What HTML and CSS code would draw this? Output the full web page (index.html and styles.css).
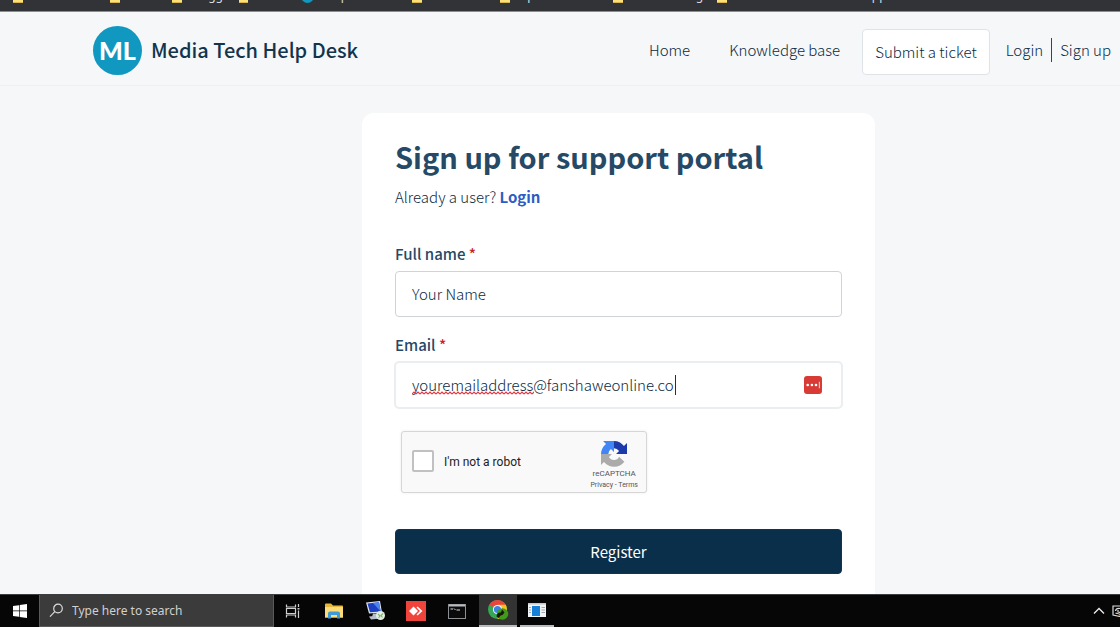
FILE: index.html
```html
<!DOCTYPE html>
<html lang="en">
<head>
  <meta charset="UTF-8">
  <meta name="viewport" content="width=device-width, initial-scale=1.0">
  <title>Media Tech Help Desk</title>
  <link rel="stylesheet" href="styles.css">
</head>
<body>
<div class="bookmarks">
  <span class="bookmark bm-1"><i class="folder"></i>Resources</span>
  <span class="bookmark bm-2"><i class="folder"></i>Media</span>
  <span class="bookmark bm-3"><i class="folder"></i>Blogger</span>
  <span class="bookmark bm-4"><i class="folder"></i>Courses</span>
  <span class="bookmark bm-5"><i class="dot"></i>Help Desk</span>
  <span class="bookmark bm-6"><i class="folder"></i>Tutorials</span>
  <span class="bookmark bm-7"><i class="folder"></i>Open Courses</span>
  <span class="bookmark bm-8"><i class="folder"></i>Tech Catalog</span>
  <span class="bookmark"><i class="folder"></i>Media Tools and Deskt apps</span>
</div>

<div class="portal">
  <header class="header">
    <a class="brand" href="#">
      <span class="logo">ML</span>
      <span>Media Tech Help Desk</span>
    </a>
    <nav class="nav">
      <a class="nav-home" href="#">Home</a>
      <a href="#">Knowledge base</a>
      <a class="ticket" href="#">Submit a ticket</a>
      <a class="nav-login" href="#">Login</a>
      <a class="nav-signup" href="#">Sign up</a>
    </nav>
  </header>

  <main class="main">
    <form class="card">
      <h1>Sign up for support portal</h1>
      <p class="already">Already a user? <a href="#">Login</a></p>

      <div class="field">
        <label for="fullName">Full name <span class="required">*</span></label>
        <input type="text" id="fullName" value="Your Name">
      </div>

      <div class="field">
        <label for="email">Email <span class="required">*</span></label>
        <div class="input-wrap">
          <input class="focused" type="text" id="email" value="youremailaddress@fanshaweonline.co" spellcheck="false">
          <svg class="squiggle" aria-hidden="true">
            <defs>
              <pattern id="wave" width="4" height="4" patternUnits="userSpaceOnUse">
                <path d="M0 3L2 1L4 3" fill="none" stroke="#e5343d" stroke-width="1.200"/>
              </pattern>
            </defs>
            <rect width="100%" height="4" fill="url(#wave)"/>
          </svg>
          <span class="caret"></span>
          <button class="fill-button" type="button" aria-label="Fill email">
            <svg width="18" height="18" viewBox="0 0 18 18">
              <rect width="18" height="18" rx="3" fill="#d83a35"/>
              <circle cx="3.7" cy="9" r="1.3" fill="#fff"/>
              <circle cx="7.9" cy="9" r="1.3" fill="#fff"/>
              <circle cx="12" cy="9" r="1.3" fill="#fff"/>
              <path d="M15.4 5.8V12.2" stroke="#f6b9b6" stroke-width="1.2"/>
            </svg>
          </button>
        </div>
      </div>

      <div class="captcha">
        <input type="checkbox" id="robot">
        <label for="robot">I'm not a robot</label>
        <div class="captcha-brand">
          <svg width="26" height="26" viewBox="0 0 64 64">
            <path fill="#1c3aa9" d="M64 32V5l-7.400 7.400A32 32 0 0 0 32 0v18a16 16 0 0 1 12.500 6.500L37 32z"/>
            <path fill="#4285f4" d="M32 0H5l7.400 7.400A32 32 0 0 0 0 32h18a16 16 0 0 1 6.500-12.500L32 27z"/>
            <path fill="#ababab" d="M0 32v27l7.400-7.400A32 32 0 0 0 57.500 51L44.500 38.500A14 14 0 0 1 19.500 39.500L27 32z"/>
          </svg>
          <span class="captcha-name">reCAPTCHA</span>
          <span class="captcha-links"><a href="#">Privacy</a> - <a href="#">Terms</a></span>
        </div>
      </div>

      <button class="register" type="submit">Register</button>
    </form>
  </main>
</div>

<footer class="taskbar">
  <button class="start" aria-label="Start">
    <svg width="14" height="14" viewBox="0 0 14 14" fill="#fff">
      <path d="M0 2L6 1.200V6.600H0zM6.700 1.100L14 0V6.600H6.700zM0 7.300H6V12.700L0 11.900zM6.700 7.300H14V14L6.700 12.900z"/>
    </svg>
  </button>
  <div class="search">
    <svg width="15" height="15" viewBox="0 0 15 15" fill="none" stroke="#dcdcdc" stroke-width="1.200">
      <circle cx="9" cy="5.500" r="4.300"/>
      <path d="M5.800 8.700L1 13.600"/>
    </svg>
    <input type="text" placeholder="Type here to search" aria-label="Search">
  </div>
  <div class="apps">
    <button aria-label="Task View">
      <svg width="16" height="16" viewBox="0 0 16 16" fill="none" stroke="#d0d0d0" stroke-width="1.200">
        <path d="M1.500 1.500V4H10.500V1.500M1.500 14.500V12H10.500V14.500M1.500 5.500H10.500V10.500H1.500zM13.500 1V4M13.500 7.500V15"/>
        <path d="M12.500 5.800H14.500" stroke="#fff"/>
      </svg>
    </button>
    <button aria-label="File Explorer">
      <svg width="18" height="16" viewBox="0 0 18 16">
        <path d="M0 1.500Q0 .5 1 .5H6L8 2.500H17Q18 2.500 18 3.500V14.500H0z" fill="#e9b63c"/>
        <path d="M0 4H18V14.500H0z" fill="#fbdc79"/>
        <path d="M3 15.500V10.500Q3 8.500 5 8.500H13Q15 8.500 15 10.500V15.500H12V12H6V15.500z" fill="#3f9bd8"/>
      </svg>
    </button>
    <button aria-label="Remote Desktop">
      <svg width="20" height="20" viewBox="0 0 20 20">
        <path d="M1 1.500L15 0L17 11.500L4 12.500z" fill="#dfe4ee"/>
        <path d="M2.500 2.500L14 1.300L15.700 10.500L5 11.300z" fill="#1c3fc4"/>
        <path d="M8 2L14 1.300L15.700 10.500z" fill="#4d83ec"/>
        <path d="M8 12.500H12L13 16H7zM4 15.500L14 14.500L16 17.500L6 18.500z" fill="#b9bfca"/>
        <circle cx="15.500" cy="14.500" r="4.500" fill="#e4eee1"/>
        <path d="M13 13L15 15L13.500 17M18 12.500L16 14.500L17.500 16.500" fill="none" stroke="#7bb274" stroke-width="1.100"/>
      </svg>
    </button>
    <button aria-label="AnyDesk">
      <svg width="20" height="20" viewBox="0 0 20 20">
        <rect width="20" height="20" fill="#ef443b"/>
        <path d="M3 10L7.500 5.500L12 10L7.500 14.500z" fill="#fff"/>
        <path d="M10.500 6.500L11.600 5.500L16.500 10L11.600 14.500L10.500 13.500L14 10z" fill="#fff"/>
      </svg>
    </button>
    <button aria-label="Command Prompt">
      <svg width="18" height="15" viewBox="0 0 18 15">
        <rect x=".5" y=".5" width="17" height="14" fill="#0b0b0b" stroke="#8d9092"/>
        <path d="M1 1.500H17" stroke="#b9bcbe" stroke-width="2"/>
        <path d="M2.500 5H5M6 4.500L7.500 6M8.500 6H12" stroke="#ddd" fill="none"/>
      </svg>
    </button>
    <button class="app-active" aria-label="Chrome">
      <svg width="22" height="22" viewBox="0 0 22 22">
        <circle cx="10.500" cy="10.500" r="9.500" fill="#34a853"/>
        <path d="M10.500 10.500L2.300 5.700A9.500 9.500 0 0 1 18.700 5.700L18 7H10.500z" fill="#e8453c"/>
        <path d="M10.500 20A9.500 9.500 0 0 0 18.700 5.800H10.500L14.500 12.800z" fill="#fbc116"/>
        <circle cx="10.500" cy="10.500" r="4.600" fill="#fff"/>
        <circle cx="10.500" cy="10.500" r="3.600" fill="#3f7fe8"/>
        <circle cx="15.500" cy="15" r="5.800" fill="#3f9c18"/>
        <path d="M9.500 17.500Q10 13 14 13.500L15 10.500L17.500 13.500L15.500 16Q13 16 12 19z" fill="#1b1512"/>
      </svg>
    </button>
    <button class="app-open" aria-label="Settings window">
      <svg width="18" height="14" viewBox="0 0 18 14">
        <rect width="18" height="14" fill="#f2f4f5"/>
        <path d="M0 .8H18" stroke="#c4cbd0" stroke-width="1.600"/>
        <rect x="4" y="3" width="8" height="10" fill="#1680d8"/>
        <path d="M1 4.500H3M1 7H3M1 9.500H3M13.500 4.500H17M13.500 7H17M13.500 9.500H17" stroke="#9fa9b0"/>
      </svg>
    </button>
  </div>
  <div class="tray">
    <svg width="12" height="8" viewBox="0 0 12 8" fill="none" stroke="#eee" stroke-width="1.300">
      <path d="M1 6.500L6 1.500L11 6.500"/>
    </svg>
    <svg width="8" height="12" viewBox="0 0 8 12" fill="none" stroke="#ddd" stroke-width="1.200">
      <path d="M8 1H1V10L8 11.500"/>
      <path d="M8 3.500Q4 3 3.500 6M3.500 8Q5.500 9 8 7M6 5V7"/>
      <path d="M7 10L8 9" stroke="#e58a2a" stroke-width="2"/>
    </svg>
  </div>
</footer>
</body>
</html>
```
FILE: styles.css
```css
* {
    box-sizing: border-box;
}
body {
    margin: 0;
    height: 100vh;
    display: flex;
    flex-direction: column;
    overflow: hidden;
    background: #f5f7f9;
    color: #0b2a42;
    font-family: "Noto Sans CJK SC", "Noto Sans", sans-serif;
    font-size: 15px;
    font-weight: 300;
    line-height: 24px;
}
a {
    color: inherit;
    text-decoration: none;
}
button, input {
    font: inherit;
}

/* Browser bookmarks */
.bookmarks {
    flex: none;
    height: 12px;
    display: flex;
    align-items: flex-end;
    padding: 0 13px 7px;
    overflow: hidden;
    white-space: nowrap;
    background: #323337;
    border-bottom: 1px solid #8c8e90;
    color: #dadce0;
    font-family: "Noto Sans", sans-serif;
    font-size: 12px;
    font-weight: 400;
    line-height: 16px;
}
.bookmark {
    flex: none;
    display: flex;
    align-items: center;
    gap: 8px;
}
.bm-1 { width: 97px; }
.bm-2 { width: 62px; }
.bm-3 { width: 67px; }
.bm-4 { width: 62px; }
.bm-5 { width: 111px; }
.bm-6 { width: 88px; }
.bm-7 { width: 113px; }
.bm-8 { width: 104px; }
.folder {
    width: 10px;
    height: 13px;
    background: #fbe07c;
    border-bottom: 1px solid #d9b64a;
}
.dot {
    width: 13px;
    height: 14px;
    border-radius: 50%;
    background: #1097bf;
}

/* Portal header */
.portal {
    flex: 1;
    min-height: 0;
    overflow: hidden;
}
.header {
    height: 74px;
    display: flex;
    justify-content: space-between;
    align-items: center;
    padding: 3px 9px 0 93px;
    border-bottom: 1px solid #eef0f2;
    white-space: nowrap;
}
.brand {
    display: flex;
    align-items: center;
    gap: 9px;
    color: #12344d;
    font-size: 20px;
    font-weight: 500;
}
.logo {
    width: 49px;
    height: 49px;
    display: flex;
    justify-content: center;
    align-items: center;
    border-radius: 50%;
    background: #1198c0;
    color: white;
    font-family: Lato, sans-serif;
    font-size: 25px;
    font-weight: 900;
}
.nav {
    display: flex;
    align-items: center;
}
.nav-home {
    margin-right: 39px;
}
.ticket {
    margin: 4px 16px 0 22px;
    padding: 10px 12px;
    background: white;
    border: 1px solid #dfe3e8;
    border-radius: 4px;
}
.nav-login {
    padding-right: 8px;
    border-right: 1px solid #264966;
}
.nav-signup {
    padding-left: 8px;
}

/* Sign up card */
.main {
    display: flex;
    justify-content: center;
    padding: 27px 0 27px 117px;
}
.card {
    width: 100%;
    max-width: 513px;
    padding: 23px 33px 33px;
    background: white;
    border-radius: 12px;
}
h1 {
    margin: 0 0 9px;
    color: #264966;
    font-size: 29px;
    line-height: 40px;
}
.already {
    margin: 0 0 33px;
}
.already a {
    color: #2c5cc5;
    font-weight: bold;
}
.field {
    margin-bottom: 16px;
}
.field label {
    display: block;
    margin-bottom: 5px;
    color: #264966;
    font-weight: 500;
}
.field .required {
    color: #c82124;
}
.field input {
    display: block;
    width: 100%;
    height: 46px;
    padding: 0 16px 2px;
    background: white;
    border: 1px solid #cfd3d7;
    border-radius: 4px;
    color: #0b2a42;
    outline: none;
}
.input-wrap {
    position: relative;
}
.field .focused {
    border-color: #ebeef0;
    box-shadow: 0 0 0 1px #ebeef0;
}
.squiggle {
    position: absolute;
    left: 17px;
    top: 29px;
    width: 122px;
    height: 4px;
}
.caret {
    position: absolute;
    left: 280px;
    top: 13px;
    width: 1px;
    height: 20px;
    background: #12344d;
}
.fill-button {
    position: absolute;
    right: 20px;
    top: 14px;
    width: 18px;
    height: 18px;
    padding: 0;
    border: none;
    background: none;
    line-height: 0;
}

/* Captcha */
.captcha {
    width: 246px;
    height: 62px;
    display: flex;
    align-items: center;
    margin: 23px 0 36px 6px;
    padding: 0 8px 0 10px;
    background: #f9f9f9;
    border: 1px solid #d6d6d6;
    border-radius: 3px;
    box-shadow: 0 0 3px rgba(0, 0, 0, 0.08);
    color: #222;
    font-family: Roboto, sans-serif;
    font-size: 12px;
    font-weight: 400;
}
.captcha input {
    appearance: none;
    width: 22px;
    height: 22px;
    margin: 0 10px 2px 0;
    background: white;
    border: 2px solid #c1c1c1;
    border-radius: 2px;
}
.captcha-brand {
    display: flex;
    flex-direction: column;
    align-items: center;
    margin-left: auto;
    padding-top: 5px;
    color: #555;
}
.captcha-name {
    font-size: 8px;
    line-height: 14px;
}
.captcha-links {
    font-size: 7px;
    line-height: 8px;
}
.register {
    display: block;
    width: 100%;
    height: 45px;
    background: #0a2f4b;
    border: 1px solid #12344d;
    border-radius: 4px;
    color: white;
    font-weight: 400;
}

/* Windows taskbar */
.taskbar {
    flex: none;
    height: 33px;
    display: flex;
    background: #060606;
    border-top: 1px solid #3b3d3e;
    font-family: "Noto Sans", sans-serif;
    font-size: 12px;
    font-weight: 400;
}
.taskbar button {
    display: flex;
    justify-content: center;
    align-items: center;
    padding: 0;
    background: none;
    border: none;
}
.taskbar .start {
    width: 39px;
}
.search {
    width: 235px;
    display: flex;
    align-items: center;
    gap: 8px;
    padding-left: 9px;
    background: #3b3b3b;
    border: 1px solid #5a5a5a;
    border-top: none;
}
.search input {
    flex: 1;
    min-width: 0;
    padding: 0;
    background: none;
    border: none;
    color: #d0d0d0;
}
.search input::placeholder {
    color: #d0d0d0;
}
.apps {
    display: flex;
    gap: 3px;
}
.apps button {
    width: 38px;
}
.taskbar .app-active {
    background: #333;
    border-bottom: 2px solid #b9bcbe;
}
.taskbar .app-open {
    width: 34px;
    border-bottom: 2px solid #b9bcbe;
}
.tray {
    display: flex;
    align-items: center;
    gap: 7px;
    margin-left: auto;
}
```
